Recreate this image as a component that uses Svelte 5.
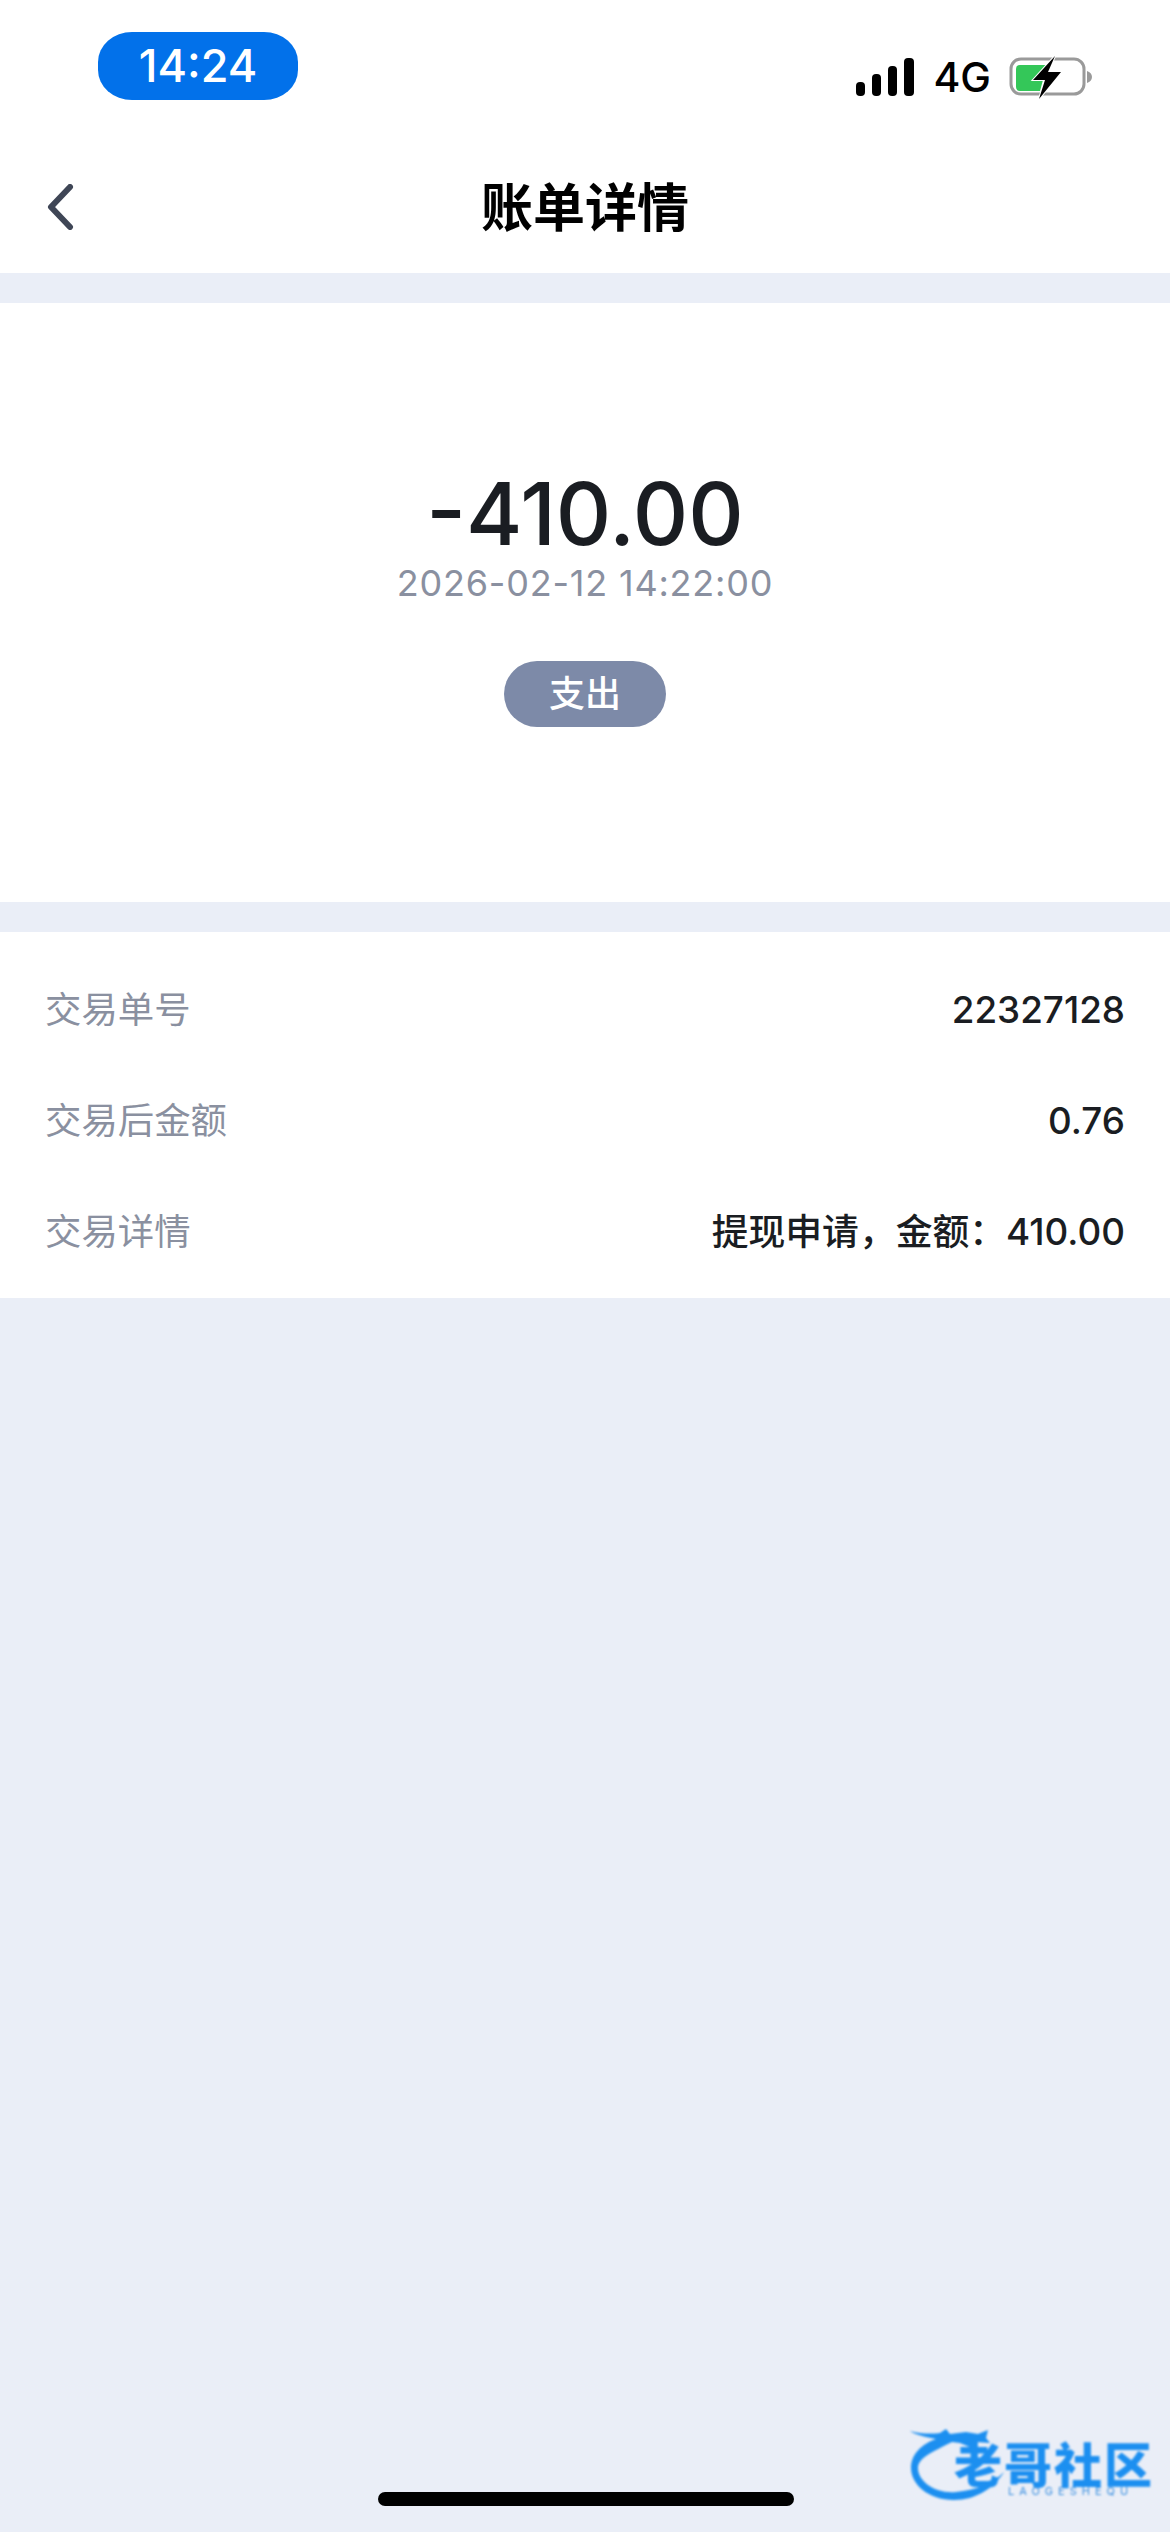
<script>
  const rows = [
    { label: "交易单号", value: "22327128" },
    { label: "交易后金额", value: "0.76" },
    { label: "交易详情", value: "提现申请，金额：410.00" }
  ];
</script>

<div class="page">
  <header class="status">
    <div class="time">14:24</div>
    <div class="indicators">
      <svg class="signal" width="58" height="38" viewBox="0 0 58 38" aria-hidden="true">
        <rect x="0" y="24" width="9" height="14" rx="4" />
        <rect x="16" y="16" width="9" height="22" rx="4" />
        <rect x="32" y="8" width="9" height="30" rx="4" />
        <rect x="48" y="0" width="10" height="38" rx="4" />
      </svg>
      <span class="network">4G</span>
      <svg class="battery" width="84" height="44" viewBox="0 0 84 44" aria-hidden="true">
        <rect x="2" y="4" width="73" height="35" rx="10" fill="none" stroke="#9a9a9a" stroke-width="3" />
        <path d="M78 16c3 1 5 3 5 6s-2 5-5 6z" fill="#9a9a9a" />
        <path d="M11 10h28l-9 13 4 2-3 11H11a4 4 0 0 1-4-4V14a4 4 0 0 1 4-4z" fill="#34c759" />
        <path d="M46 1 24 25h12l-6 19 22-27H39z" fill="#000" stroke="#fff" stroke-width="2" paint-order="stroke" />
      </svg>
    </div>
  </header>

  <nav class="navbar">
    <svg class="back" width="28" height="46" viewBox="0 0 28 46" aria-hidden="true">
      <path d="M24 3 5 23l19 20" fill="none" stroke="#3f4656" stroke-width="6" stroke-linecap="round" stroke-linejoin="round" />
    </svg>
    <h1>账单详情</h1>
  </nav>

  <section class="summary">
    <div class="amount">-410.00</div>
    <div class="date">2026-02-12 14:22:00</div>
    <div class="tag">支出</div>
  </section>

  <section class="details">
    {#each rows as row}
      <div class="row">
        <span class="label">{row.label}</span>
        <span class="value">{row.value}</span>
      </div>
    {/each}
  </section>

  <div class="watermark">
    <svg class="dragon" width="130" height="90" viewBox="0 0 130 90" aria-hidden="true">
      <path d="M2 7c10 3 22 3 30 2l6-4 4 5 16-2 12 2 10-4-2 8 4 5-14-1-4 6-12-5-8-1C24 28 10 34 10 44c0 14 18 26 38 24 20-2 36-8 48-20-10 16-28 28-50 28C20 76 3 60 3 44 3 30 14 20 28 15 18 13 8 11 2 7z" fill="#1c8ff0" />
    </svg>
    <div class="mark-title">老哥社区</div>
    <div class="mark-sub">LAOGESHEQU</div>
  </div>

  <div class="home-bar"></div>
</div>

<style>
  :global(body) {
    margin: 0;
    background: #eaeef7;
  }
  .page {
    position: relative;
    width: 1170px;
    height: 2532px;
    overflow: hidden;
    background: #eaeef7;
    font-family: Inter, "Noto Sans CJK SC", sans-serif;
  }
  .status {
    height: 136px;
    background: #fff;
    display: flex;
    justify-content: space-between;
    box-sizing: border-box;
    padding: 32px 77px 0 98px;
  }
  .time {
    width: 200px;
    height: 68px;
    border-radius: 34px / 30px;
    background: #0271ea;
    color: #fff;
    font-size: 45px;
    font-weight: 500;
    line-height: 68px;
    text-align: center;
  }
  .indicators {
    display: flex;
    align-items: center;
    height: 44px;
    margin-top: 23px;
  }
  .signal {
    fill: #000;
    margin-right: 19px;
  }
  .network {
    font-size: 41px;
    font-weight: 500;
    color: #000;
    margin-right: 18px;
  }
  .navbar {
    position: relative;
    height: 137px;
    background: #fff;
    display: flex;
    align-items: center;
    justify-content: center;
  }
  .back {
    position: absolute;
    left: 46px;
    top: 48px;
  }
  h1 {
    margin: 0 0 1px;
    font-size: 52px;
    font-weight: 700;
    color: #000;
  }
  .summary {
    margin-top: 30px;
    height: 599px;
    background: #fff;
    display: flex;
    flex-direction: column;
    align-items: center;
    box-sizing: border-box;
    padding-top: 164px;
  }
  .amount {
    font-size: 86px;
    font-weight: 550;
    line-height: 94px;
    color: #1a1d22;
  }
  .date {
    font-size: 36px;
    line-height: 44px;
    letter-spacing: 0.8px;
    color: #8a90a0;
  }
  .tag {
    margin-top: 56px;
    width: 162px;
    height: 66px;
    border-radius: 33px;
    background: #7d8aa8;
    color: #fff;
    font-size: 36px;
    font-weight: 500;
    line-height: 66px;
    text-align: center;
  }
  .details {
    margin-top: 30px;
    height: 366px;
    background: #fff;
    box-sizing: border-box;
    padding: 22px 45px 0;
  }
  .row {
    height: 111px;
    display: flex;
    align-items: baseline;
    justify-content: space-between;
    font-size: 36.8px;
    line-height: 111px;
  }
  .label {
    color: #8a90a0;
    font-size: 36.4px;
  }
  .value {
    color: #1a1d22;
    font-weight: 500;
  }
  .watermark {
    position: absolute;
    left: 908px;
    top: 2424px;
    width: 250px;
    height: 84px;
    filter: blur(0.8px);
  }
  .dragon {
    position: absolute;
    left: 0;
    top: 0;
  }
  .mark-title {
    position: absolute;
    left: 46px;
    top: 24px;
    font-size: 48px;
    line-height: 36px;
    font-weight: 900;
    letter-spacing: 2px;
    white-space: nowrap;
    color: #1c8ff0;
  }
  .mark-sub {
    position: absolute;
    left: 100px;
    top: 60px;
    font-size: 11px;
    line-height: 14px;
    letter-spacing: 5px;
    color: #3a8fe0;
  }
  .home-bar {
    position: absolute;
    left: 378px;
    top: 2492px;
    width: 416px;
    height: 14px;
    border-radius: 7px;
    background: #000;
  }
</style>
